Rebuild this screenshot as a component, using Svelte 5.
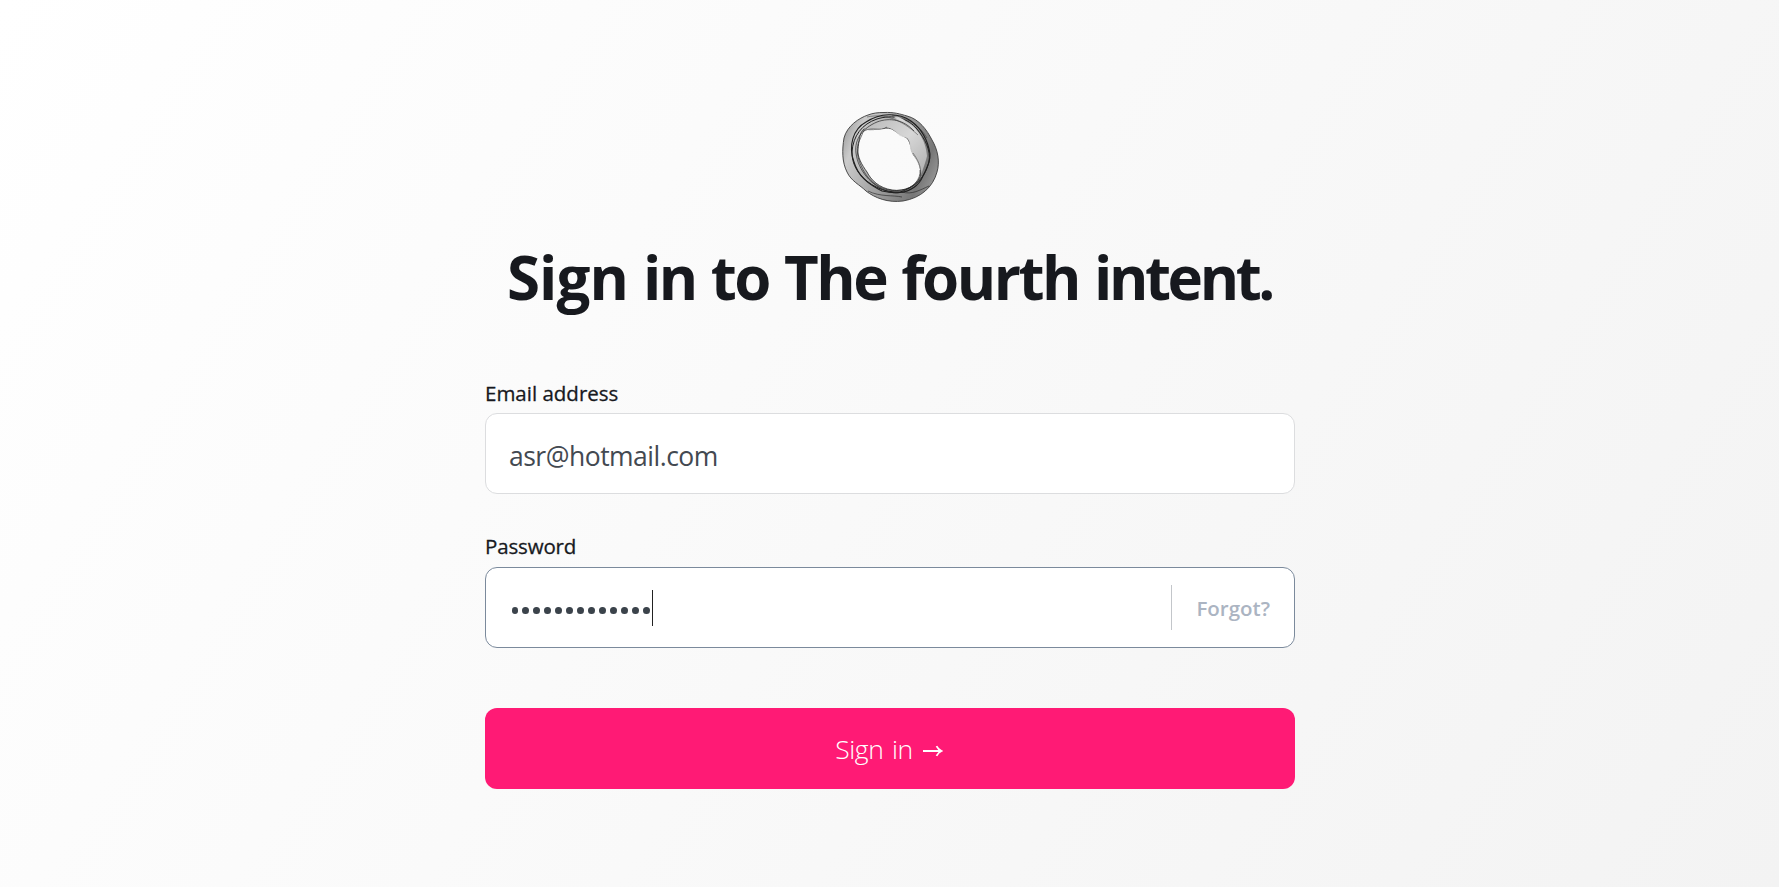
<script>
  let email = $state('asr@hotmail.com');
  const dots = Array.from({ length: 13 });
</script>

<main>
  <svg class="logo" viewBox="0 0 120 110" aria-label="The fourth intent">
    <defs>
      <linearGradient id="outer" x1="0" y1="0.3" x2="1" y2="0.7">
        <stop offset="0" stop-color="#a8a8a8" />
        <stop offset="0.12" stop-color="#cbcbcb" />
        <stop offset="0.5" stop-color="#a0a0a0" />
        <stop offset="0.85" stop-color="#777" />
        <stop offset="1" stop-color="#969696" />
      </linearGradient>
      <linearGradient id="inner" x1="0" y1="0" x2="1" y2="1">
        <stop offset="0" stop-color="#b5b5b5" />
        <stop offset="0.5" stop-color="#dedede" />
        <stop offset="1" stop-color="#b5b5b5" />
      </linearGradient>
    </defs>
    <path fill="url(#outer)" fill-rule="evenodd" stroke="#3b3b3b" stroke-width=".9" d="M54 12.5C64 12 70 14 77 16C89 19 97 30 102 40C108 50 110 62 107 72C103 87 91 98 73 101C58 103 45 98 36 91C30 85 21 81 17 72C12 62 12 50 14 38C17 26 29 18 38 15C43 13 48 12.5 54 12.5ZM34 29C29 33 29 42 28 49C27 57 32 65 37 72C41 80 49 88 62 90C75 92 86 86 90 77C92 69 89 62 85 57C80 51 82 44 77 38C71 35 69 34 65 31C57 24 48 32 34 29Z" />
    <path fill="url(#inner)" opacity=".9" d="M32 33C38 20 56 17 72 20C86 24 96 40 97 56C95 65 92 70 91 77C91 67 86 59 82 53C78 47 82 43 77 38L70 36C65 31 62 28 56 27C49 32 41 28 35 31Z" />
    <g fill="none" stroke="#202020">
      <path stroke-width="1.1" d="M24 62C18 46 23 29 36 22C50 13 68 12 81 21C92 29 98 41 100 54C101 62 95 72 91 80C82 94 65 94 52 91C38 84 28 76 24 62Z" />
      <path stroke-width="1" d="M22 52C23 36 32 24 47 19C63 14 78 18 87 29C95 39 101 50 99 62C95 76 88 86 70 92C54 93 38 85 29 73C24 66 22 60 22 52Z" />
      <path stroke-width=".8" opacity=".85" d="M26 53C24 39 33 28 47 22C60 17 74 20 84 31M26 53C28 70 41 86 59 92C71 95 80 90 87 85" />
      <path stroke-width=".8" opacity=".75" d="M28 44C25 56 32 69 37 76C47 89 60 92 71 90C83 89 91 79 90 70M28 44L34 30M38 91C50 97 63 95 72 97M72 92C82 95 90 90 99 86" />
      <path stroke-width=".7" opacity=".6" d="M34 31C43 26 50 32 57 27M83 53C88 60 91 66 91 76M37 17C55 13 72 20 88 35M62 15C75 17 89 24 97 38" />
    </g>
    <path fill="#dedede" opacity=".9" d="M64 17C68 16 73 18 76 22C72 21 68 20 64 17Z" />
  </svg>

  <h1><span class="lead">Sign</span> in to The fourth <span class="tail">intent.</span></h1>

  <form onsubmit={(e) => e.preventDefault()}>
    <label class="mail-label" for="email">Email address</label>
    <input id="email" class="field" type="text" bind:value={email} />

    <label class="pass-label" for="password">Password</label>
    <div id="password" class="field active">
      <span class="dots">{#each dots as _}<i></i>{/each}</span>
      <span class="caret"></span>
      <a class="forgot" href="#forgot">Forgot?</a>
    </div>

    <button>
      <span>Sign in</span>
      <svg width="20" height="14" viewBox="0 0 20 14"><path d="M0 7H18M13.5 2.2Q15.2 5.5 18.5 7Q15.2 8.5 13.5 11.8" fill="none" stroke="#fff" stroke-width="1.8" /></svg>
    </button>
  </form>
</main>

<style>
  :global(body) { margin: 0; }
  main {
    box-sizing: border-box;
    height: 887px;
    padding-top: 100px;
    display: flex;
    flex-direction: column;
    align-items: center;
    overflow: hidden;
    background: linear-gradient(122deg, #fff, #f3f3f3);
    font-family: "Open Sans", "Noto Sans", sans-serif;
  }
  .logo { width: 120px; height: 110px; flex: none; }
  h1 {
    margin: 25px 0 0;
    height: 84px;
    line-height: 84px;
    font-size: 60px;
    font-weight: 700;
    letter-spacing: -2.45px;
    word-spacing: 1.8px;
    color: #17191e;
    white-space: nowrap;
  }
  .lead { letter-spacing: -0.9px; }
  .tail { letter-spacing: -3.4px; }
  form { width: 810px; display: flex; flex-direction: column; margin-left: 1px; }
  label {
    height: 30px;
    line-height: 30px;
    font-size: 20.5px;
    font-weight: 500;
    -webkit-text-stroke: 0.3px #17191e;
    color: #17191e;
  }
  .mail-label { margin-top: 59px; letter-spacing: 0; }
  .pass-label { margin-top: 37px; letter-spacing: -0.15px; }
  .field {
    box-sizing: border-box;
    width: 810px;
    height: 81px;
    border: 1px solid #dcdddf;
    border-radius: 12px;
    background: #fff;
    color: #434951;
    outline: none;
  }
  input.field {
    margin-top: 5px;
    padding: 4px 23px 0;
    font: 400 26.5px "Open Sans", "Noto Sans", sans-serif;
    letter-spacing: -0.5px;
  }
  .active {
    margin-top: 6px;
    padding: 0 24px 0 25px;
    display: flex;
    align-items: center;
    border-color: #7b8a9c;
  }
  .dots { display: flex; gap: 4.4px; padding: 6px 0 0 0.5px; }
  .dots i { width: 6.6px; height: 7px; border-radius: 50%; background: #3b434b; }
  .caret { width: 1px; height: 36px; margin-left: 2.4px; background: #222; }
  .forgot {
    margin-left: auto;
    height: 45px;
    line-height: 46px;
    padding-left: 24px;
    border-left: 1px solid #c3c6ca;
    font-size: 20.5px;
    font-weight: 600;
    color: #abb4c2;
    text-decoration: none;
  }
  button {
    width: 810px;
    height: 81px;
    margin-top: 60px;
    padding: 0 2px 0 0;
    display: flex;
    align-items: center;
    justify-content: center;
    gap: 10px;
    border: 0;
    border-radius: 12px;
    background: #ff1a75;
    color: #fff;
    font: 300 26.5px "Open Sans", "Noto Sans", sans-serif;
    letter-spacing: -0.4px;
    word-spacing: 2px;
  }
  button svg { margin-top: 5px; }
</style>
